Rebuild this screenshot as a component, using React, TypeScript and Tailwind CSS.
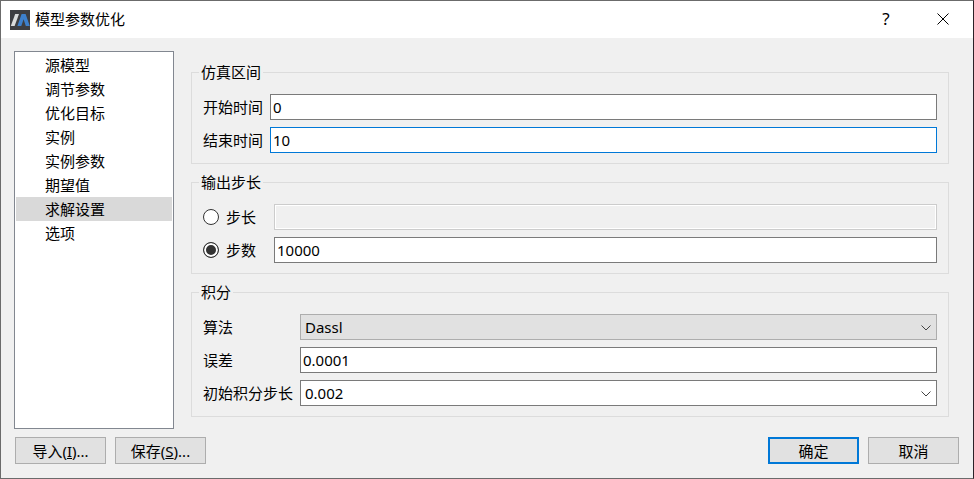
import type { ReactNode } from 'react';

const pages = ['源模型', '调节参数', '优化目标', '实例', '实例参数', '期望值', '求解设置', '选项'];
const currentPage = '求解设置';

const fieldBase = 'h-[26px] w-full min-w-0 border px-[2px] outline-none';

function AppLogo() {
  return (
    <svg viewBox="0 0 20 20" className="size-5 shrink-0" aria-hidden="true">
      <rect width="20" height="20" fill="#3d3e41" />
      <path d="M0.800 16 5.200 4H9L4.600 16Z" fill="#d9dbdb" />
      <path d="M7.400 16 11.600 4H15.600L19.800 16H15.800L13.600 9.200 11.300 16Z" fill="#3d80cc" />
    </svg>
  );
}

function Group({ title, children }: { title: string; children: ReactNode }) {
  return (
    <fieldset className="min-w-0 border border-[#dcdcdc] pt-[11px] pr-[11px] pb-[10px] pl-[7px]">
      <legend className="h-[21px] px-[2px] leading-[21px]">{title}</legend>
      <div className="flex flex-col gap-[7px] pl-1">{children}</div>
    </fieldset>
  );
}

function Dropdown({ id, value, className }: { id: string; value: string; className: string }) {
  return (
    <div className="relative min-w-0 flex-1">
      <select id={id} defaultValue={value} className={`h-[26px] w-full appearance-none border px-1 outline-none ${className}`}>
        <option>{value}</option>
      </select>
      <svg
        viewBox="0 0 10 6"
        className="pointer-events-none absolute top-[11px] right-[6px] h-[6px] w-[10px]"
        fill="none"
        stroke="#444"
        aria-hidden="true"
      >
        <path d="M0.500 0.500 5 5 9.500 0.500" />
      </svg>
    </div>
  );
}

function PushButton({ primary = false, children }: { primary?: boolean; children: ReactNode }) {
  return (
    <button
      type="button"
      className={`h-[27px] w-[91px] bg-[#e1e1e1] ${primary ? 'border-2 border-[#0078d7]' : 'border border-[#adadad]'}`}
    >
      {children}
    </button>
  );
}

export default function App() {
  return (
    <div className="flex min-h-screen flex-col border border-[#6b6b6b] border-r-[#2b2228] bg-[#f0f0f0] font-['Noto_Sans','Noto_Sans_CJK_SC',sans-serif] text-[15px] leading-6 text-black">
      <header className="flex h-[37px] items-center bg-white pl-[9px]">
        <AppLogo />
        <h1 className="flex-1 pb-px pl-[5px]">{'模型参数优化'}</h1>
        <button type="button" aria-label="帮助" className="h-full w-[54px] pb-px text-[17px]">
          ?
        </button>
        <button type="button" aria-label="关闭" className="flex h-full w-[60px] items-center justify-center pb-px">
          <svg viewBox="0 0 12 12" className="size-3" stroke="#000" fill="none" aria-hidden="true">
            <path d="M0.500 0.500 11.500 11.500M11.500 0.500 0.500 11.500" />
          </svg>
        </button>
      </header>

      <main className="flex flex-1 gap-[17px] pt-[13px] pr-6 pl-[13px]">
        <nav className="w-40 shrink-0 border border-[#828790] bg-white p-px">
          <ul>
            {pages.map((page) => (
              <li key={page}>
                <button
                  type="button"
                  aria-current={page === currentPage ? 'page' : undefined}
                  className={`block h-6 w-full pl-[29px] text-left ${page === currentPage ? 'bg-[#d9d9d9]' : ''}`}
                >
                  {page}
                </button>
              </li>
            ))}
          </ul>
        </nav>

        <form className="flex min-w-0 flex-1 flex-col gap-2 pt-[11px]">
          <Group title="仿真区间">
            <div className="flex items-center">
              <label htmlFor="start" className="w-[67px] shrink-0">开始时间</label>
              <input id="start" type="text" defaultValue="0" className={`${fieldBase} border-[#7a7a7a] bg-white`} />
            </div>
            <div className="flex items-center">
              <label htmlFor="end" className="w-[67px] shrink-0">结束时间</label>
              <input id="end" type="text" defaultValue="10" className={`${fieldBase} border-[#0078d7] bg-white`} />
            </div>
          </Group>

          <Group title="输出步长">
            {[
              { id: 'interval', label: '步长', value: '', on: false },
              { id: 'count', label: '步数', value: '10000', on: true },
            ].map(({ id, label, value, on }) => (
              <div key={id} className="flex items-center">
                <label className="flex w-[71px] shrink-0 items-center gap-[7px]">
                  <input
                    type="radio"
                    name="output"
                    value={id}
                    defaultChecked={on}
                    className="size-4 appearance-none rounded-full border border-[#333] bg-white checked:bg-[#333] checked:shadow-[inset_0_0_0_2px_white]"
                  />
                  {label}
                </label>
                <input
                  type="text"
                  aria-label={label}
                  defaultValue={value}
                  disabled={!on}
                  className={`${fieldBase} ${on ? 'border-[#7a7a7a] bg-white' : 'border-[#cccccc] bg-[#f0f0f0] shadow-[inset_0_0_0_1px_white]'}`}
                />
              </div>
            ))}
          </Group>

          <Group title="积分">
            <div className="flex items-center">
              <label htmlFor="method" className="w-[97px] shrink-0">算法</label>
              <Dropdown id="method" value="Dassl" className="border-[#adadad] bg-[#e1e1e1]" />
            </div>
            <div className="flex items-center">
              <label htmlFor="tolerance" className="w-[97px] shrink-0">误差</label>
              <input id="tolerance" type="text" defaultValue="0.0001" className={`${fieldBase} border-[#7a7a7a] bg-white`} />
            </div>
            <div className="flex items-center">
              <label htmlFor="initial" className="w-[97px] shrink-0">初始积分步长</label>
              <Dropdown id="initial" value="0.002" className="border-[#7a7a7a] bg-white" />
            </div>
          </Group>
        </form>
      </main>

      <footer className="flex gap-[9px] px-[14px] pt-2 pb-[14px]">
        <PushButton>
          导入(<u>I</u>)...
        </PushButton>
        <PushButton>
          保存(<u>S</u>)...
        </PushButton>
        <div className="flex-1" />
        <PushButton primary>确定</PushButton>
        <PushButton>取消</PushButton>
      </footer>
    </div>
  );
}
